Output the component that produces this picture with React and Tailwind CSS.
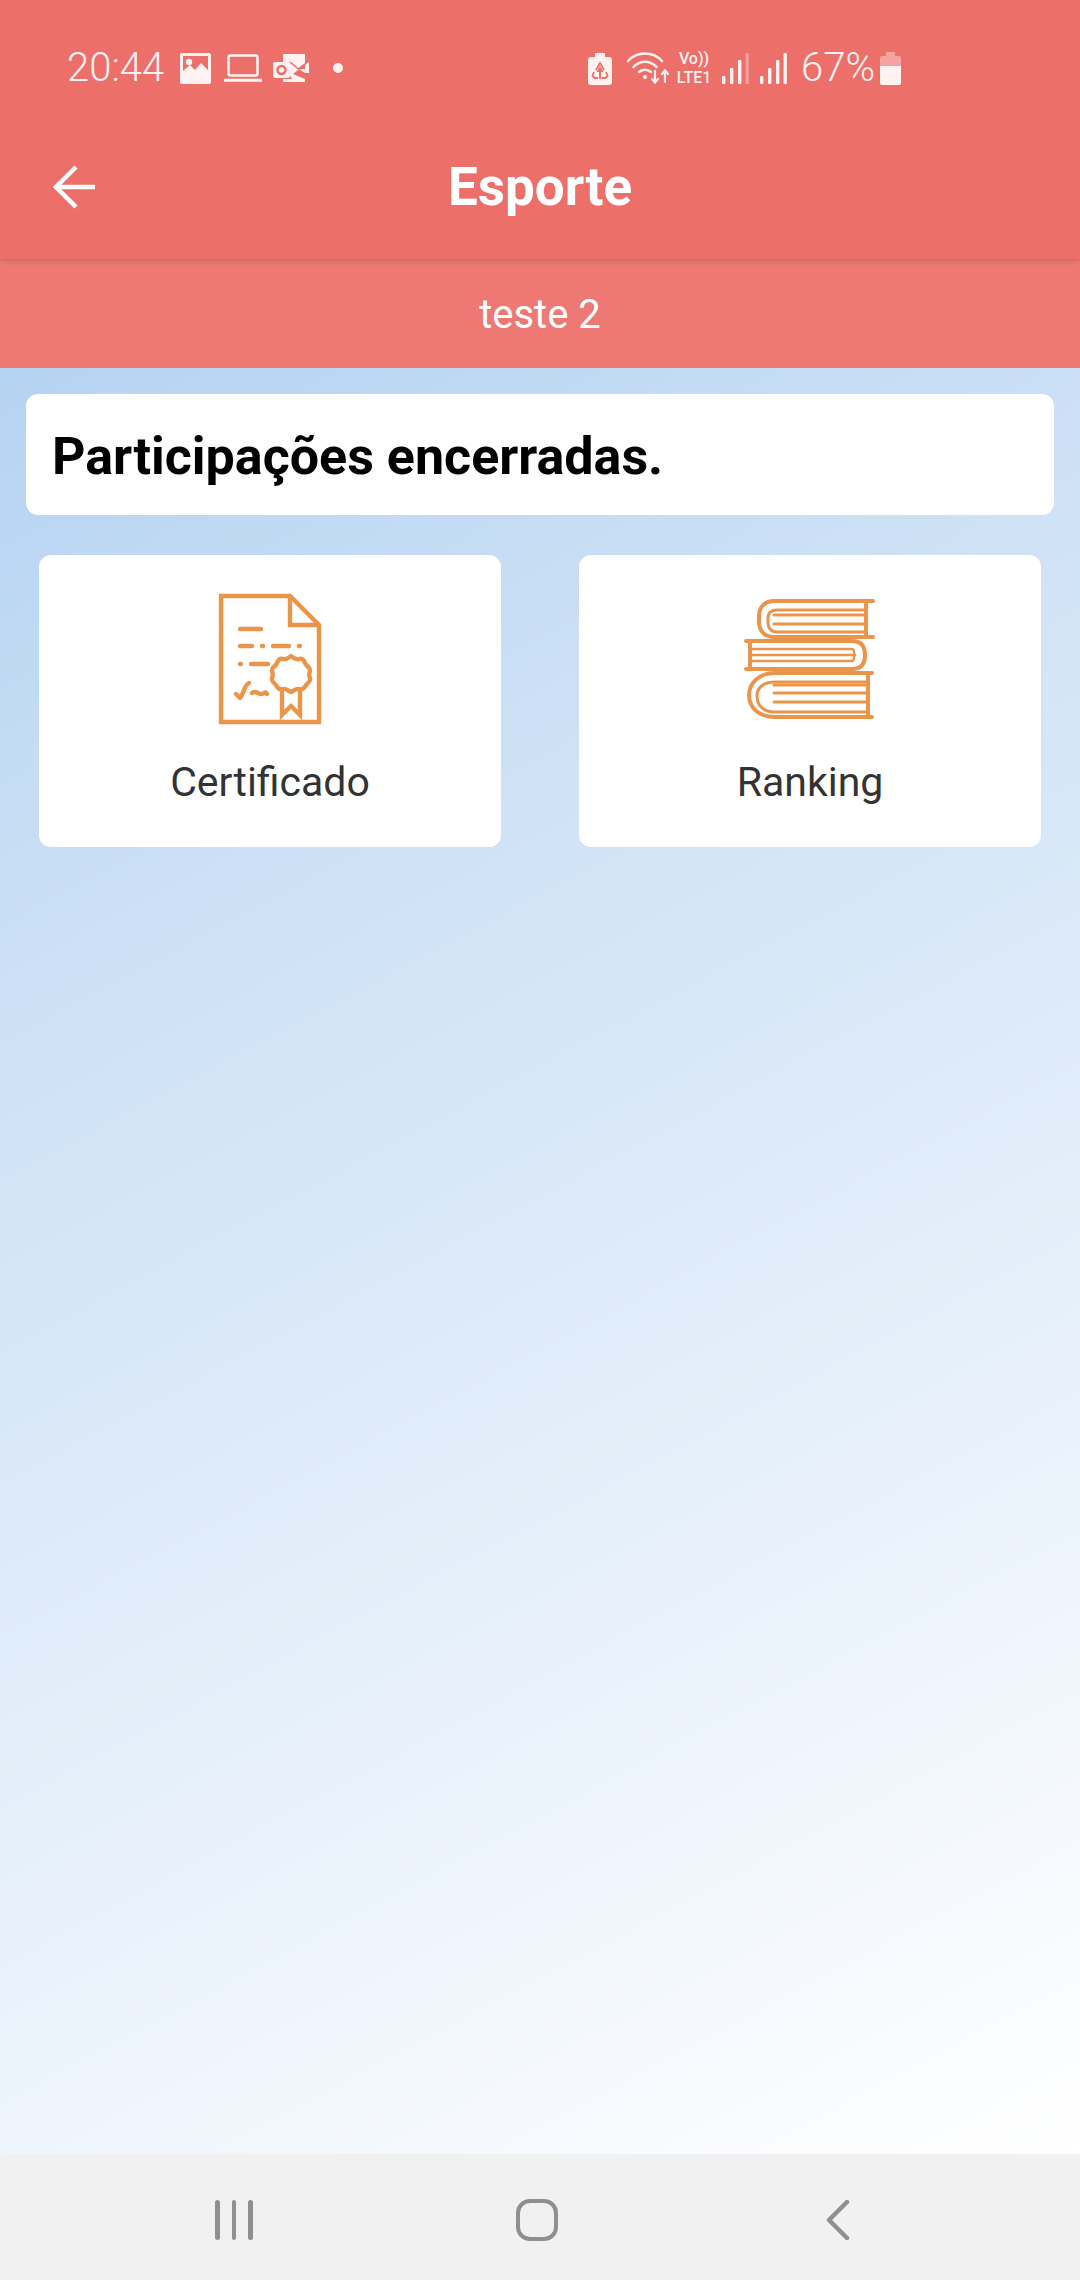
const Arrow = () => (
  <svg width="46" height="46" viewBox="0 0 46 46" fill="none" stroke="#fff" strokeWidth="4.5">
    <path d="M44 23H5" />
    <path d="M25 3L5 23L25 43" />
  </svg>
);

const ImageIcon = () => (
  <svg width="31" height="31" viewBox="0 0 31 31" className="shrink-0">
    <path fillRule="evenodd" fill="#fff2f1" d="M2 0H29a2 2 0 0 1 2 2V29a2 2 0 0 1-2 2H2a2 2 0 0 1-2-2V2a2 2 0 0 1 2-2ZM3 3V18L10 12L15 17L21 10L28 17V3Z" />
    <circle cx="9" cy="9" r="3.2" fill="#fff2f1" />
  </svg>
);

const LaptopIcon = () => (
  <svg width="38" height="28" viewBox="0 0 38 28" className="shrink-0" fill="none" stroke="#fff2f1" strokeWidth="2.6">
    <rect x="4.5" y="1.5" width="29" height="20" rx="2" />
    <path d="M0 26.2H38" strokeWidth="3" />
  </svg>
);

const OutlookIcon = () => (
  <svg width="36" height="28" viewBox="0 0 36 28" className="shrink-0">
    <path fill="#fff2f1" d="M10 0H32V9L24 15L32 15V11L36 8V19L32 19L25 16L20 20L32 25V28H10V25H19L16 20V8H10Z" />
    <rect x="0" y="8" width="17" height="16" rx="2" fill="#fff2f1" />
    <circle cx="8.5" cy="16" r="4" fill="none" stroke="#ed6f69" strokeWidth="2.4" />
    <path d="M17 8L34 22" stroke="#ed6f69" strokeWidth="1.5" />
  </svg>
);

const RecycleBattery = () => (
  <svg width="24" height="33" viewBox="0 0 24 33" className="shrink-0">
    <path fill="#fff2f1" d="M7 1H17V5H21a3 3 0 0 1 3 3V30a3 3 0 0 1-3 3H3a3 3 0 0 1-3-3V8a3 3 0 0 1 3-3H7Z" />
    <path fill="none" stroke="#ed6f69" strokeWidth="1.8" d="M8 18L12 11L16 18M6 20L4.5 24L6.5 26H10M18 20L19.5 24L17.5 26H14" />
    <path fill="#ed6f69" d="M12 14L15.5 20H8.5ZM11 20H13V27H11Z" />
  </svg>
);

const Wifi = () => (
  <svg width="42" height="32" viewBox="0 0 42 32" className="shrink-0" fill="none" stroke="#fff2f1" strokeWidth="2.6" strokeLinecap="round">
    <path d="M1 9C10 -1 26 -1 35 9" />
    <path d="M6.5 15C13 8 23 8 29.5 15" />
    <path d="M12 20C15.5 17 20.5 17 24 20" />
    <circle cx="18" cy="25" r="2" fill="#fff2f1" stroke="none" />
    <path d="M28 19V30M25 27L28 30.5L31 27" strokeWidth="2.2" />
    <path d="M38 30V19M35 22L38 18.5L41 22" strokeWidth="2.2" />
  </svg>
);

const Signal = ({ faded }) => (
  <svg width="27" height="32" viewBox="0 0 27 32" className="shrink-0">
    <rect x="0" y="24" width="3.4" height="8" rx="1" fill="#fff2f1" />
    <rect x="8" y="16" width="3.4" height="16" rx="1" fill="#fff2f1" />
    <rect x="16" y="8" width="3.4" height="24" rx="1" fill="#fff2f1" />
    <rect x="23.5" y="1" width="3.4" height="31" rx="1" fill="#fff2f1" fillOpacity={faded ? 0.35 : 1} />
  </svg>
);

const Battery = () => (
  <svg width="21" height="33" viewBox="0 0 21 33" className="shrink-0">
    <path fill="#f6a3a0" d="M6 0H15V4H19a2 2 0 0 1 2 2V14H0V6a2 2 0 0 1 2-2H6Z" />
    <path fill="#fff2f1" d="M0 14H21V31a2 2 0 0 1-2 2H2a2 2 0 0 1-2-2Z" />
  </svg>
);

const Certificate = () => (
  <svg width="160" height="170" viewBox="0 0 160 170" fill="none" stroke="#ea954a" strokeWidth="4.4" strokeLinejoin="round">
    <path d="M31 26H100L129 55V152H31Z" strokeLinejoin="miter" />
    <path d="M100 26V55H129" strokeLinejoin="miter" />
    <g strokeLinecap="round" strokeWidth="4.4">
      <path d="M50 59H71" />
      <path d="M50 76H62M72 76H73M83 76H99M109 76H110" />
      <path d="M50 94H51M61 94H78" />
      <path d="M46 124L50 128C54 124 54 115 59 113M62 123C66 119 70 127 74 123C75 122 76 122 77 124" />
    </g>
    <path d="M101 86C104 88 106 90 109 89C112 88 114 90 115 93C116 96 120 97 120 100C120 103 118 105 120 108C121 111 118 113 116 115C115 118 112 120 109 119C106 118 104 121 101 122C98 121 96 118 93 119C90 120 87 118 86 115C84 113 81 111 82 108C84 105 82 103 82 100C82 97 86 96 87 93C88 90 90 88 93 89C96 90 98 88 101 86Z" />
    <path d="M92 119V145L101 136L110 145V119" strokeLinejoin="miter" />
  </svg>
);

const Books = () => (
  <svg width="160" height="160" viewBox="0 0 160 160" fill="none" stroke="#ea954a" strokeWidth="4" strokeLinecap="round">
    <path d="M143 21H44C34 21 29 28 29 36V42C29 50 34 57 44 57H143" />
    <path d="M136 21V57" />
    <path d="M135 30H47C41 30 38 33 38 38V42C38 48 41 52 47 52H135" strokeWidth="3" />
    <path d="M44 35H135M44 44H135" strokeWidth="3" />
    <path d="M16 61H122C131 61 135 66 135 75C135 84 131 89 122 89H16" />
    <path d="M20 61V89" />
    <path d="M22 69H122C125 69 125 81 122 81H22M22 75H125" strokeWidth="2.6" />
    <path d="M142 93H45C28 93 19 104 19 115C19 127 28 137 45 137H142" />
    <path d="M138 93V137" />
    <path d="M138 102H45C33 102 27 108 27 116C27 125 33 132 45 132H138" strokeWidth="3" />
    <path d="M44 105H136M44 113H136M44 122H136" strokeWidth="3" />
  </svg>
);

const NavBack = () => (
  <svg width="24" height="40" viewBox="0 0 24 40" fill="none" stroke="#8f8f8f" strokeWidth="4.5" strokeLinecap="round" strokeLinejoin="round">
    <path d="M21 2L3 20L21 38" />
  </svg>
);

export default function App() {
  return (
    <div className="w-[1080px] h-[2280px] flex flex-col overflow-hidden font-['Roboto',sans-serif]">
      <header className="relative z-10 bg-[#ed6f69] shadow-[0_2px_5px_rgba(0,0,0,0.14)] text-white">
        <div className="h-[113px] pt-[23px] pl-[67px] flex items-center">
          <span className="text-[40px] leading-none font-light text-[#fff2f1] w-[113px] shrink-0">20:44</span>
          <ImageIcon />
          <span className="w-[13px] shrink-0" />
          <LaptopIcon />
          <span className="w-[11px] shrink-0" />
          <OutlookIcon />
          <span className="ml-[24px] w-[10px] h-[10px] rounded-full bg-[#fff2f1] shrink-0" />
          <span className="w-[245px] shrink-0" />
          <RecycleBattery />
          <span className="w-[15px] shrink-0" />
          <Wifi />
          <span className="w-[5px] shrink-0" />
          <div className="w-[40px] shrink-0 flex flex-col items-center text-[#fff2f1] font-medium">
            <span className="text-[16px] leading-[19px]">Vo))</span>
            <span className="text-[16px] leading-[19px]">LTE1</span>
          </div>
          <span className="w-[8px] shrink-0" />
          <Signal faded />
          <span className="w-[11px] shrink-0" />
          <Signal />
          <span className="w-[14px] shrink-0" />
          <span className="text-[40px] leading-none font-light text-[#fff2f1] w-[79px] shrink-0">67%</span>
          <Battery />
        </div>
        <div className="h-[146px] pt-[2px] grid grid-cols-[1fr_auto_1fr] items-center">
          <div className="pl-[51px] flex items-center">
            <Arrow />
          </div>
          <h1 className="text-[53px] leading-none font-bold">Esporte</h1>
          <div />
        </div>
      </header>
      <div className="h-[109px] pt-[2px] shrink-0 bg-[#ee7873] flex items-center justify-center text-white text-[40px] leading-none">
        teste 2
      </div>
      <main className="flex-1 px-[26px] pt-[26px] bg-[linear-gradient(152deg,#b5d3f2_0%,#cfe2f6_30%,#ffffff_100%)]">
        <div className="h-[121px] pt-[5px] bg-white rounded-[12px] pl-[26px] flex items-center text-[52px] leading-none font-bold text-black">
          Participações encerradas.
        </div>
        <div className="mt-[40px] px-[13px] grid grid-cols-[462px_462px] gap-[78px]">
          <div className="h-[292px] bg-white rounded-[12px] flex flex-col items-center">
            <div className="mt-[15px] h-[170px]">
              <Certificate />
            </div>
            <span className="mt-[22px] text-[41px] leading-none text-[#333333]">Certificado</span>
          </div>
          <div className="h-[292px] bg-white rounded-[12px] flex flex-col items-center">
            <div className="mt-[25px] h-[160px]">
              <Books />
            </div>
            <span className="mt-[22px] text-[41px] leading-none text-[#333333]">Ranking</span>
          </div>
        </div>
      </main>
      <nav className="h-[126px] shrink-0 pt-[5px] bg-[#f1f1f1] flex items-center pl-[215px]">
        <div className="flex gap-[12px] h-[40px] w-[38px]">
          <span className="w-[4.5px] h-[40px] rounded-full bg-[#8f8f8f]" />
          <span className="w-[4.5px] h-[40px] rounded-full bg-[#8f8f8f]" />
          <span className="w-[4.5px] h-[40px] rounded-full bg-[#8f8f8f]" />
        </div>
        <div className="ml-[263px] w-[42px] h-[42px] rounded-[14px] border-[4.5px] border-[#8f8f8f]" />
        <div className="ml-[268px]">
          <NavBack />
        </div>
      </nav>
    </div>
  );
}
